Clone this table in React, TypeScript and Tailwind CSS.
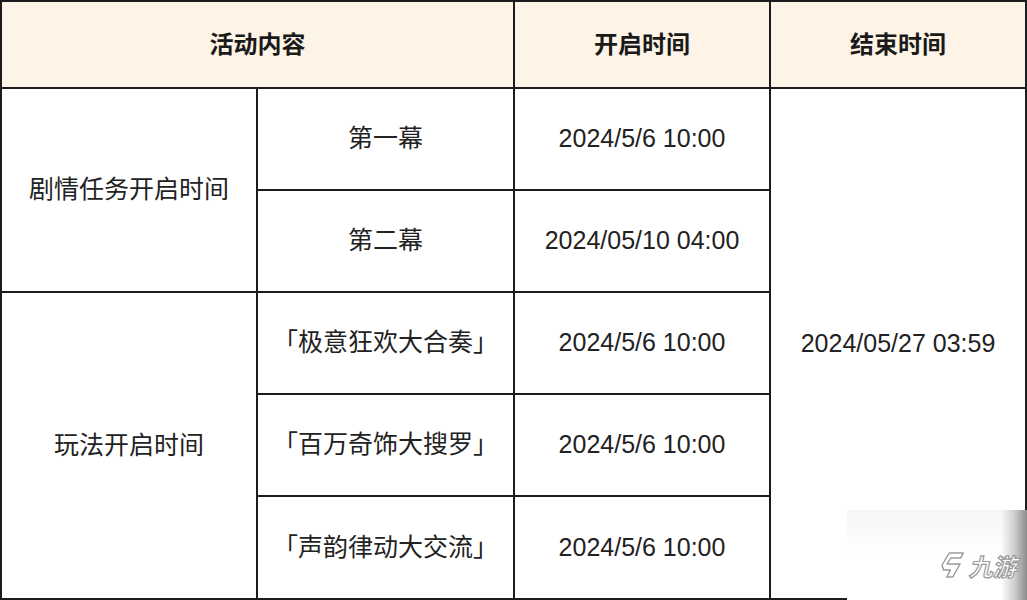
import React from "react";

const cell = "flex items-center justify-center bg-white text-[25px] text-[#222]";

function Watermark() {
  return (
    <div className="pointer-events-none absolute bottom-0 right-0 h-[90px] w-[180px] bg-gradient-to-b from-[#f6f6f6] via-white to-white">
      <div className="absolute inset-y-0 right-0 w-[26px] bg-gradient-to-r from-transparent via-[#d0d0d0] to-[#8c8c8c]" />
      <div className="absolute bottom-[22px] left-[94px] flex items-end gap-[8px]">
        <svg width="22" height="26" viewBox="0 0 22 26" className="-skew-x-6">
          <path
            d="M7 1 H21 L19 6 H9 L6 12 H19 L13 25 H7 L10 18 H3 L1 13 Z"
            fill="#ffffff"
            stroke="#9a9a9a"
            strokeWidth="1.5"
            strokeLinejoin="round"
          />
        </svg>
        <span className="-skew-x-12 font-['Noto_Sans_CJK_SC',sans-serif] text-[24px] font-bold leading-none text-white [-webkit-text-stroke:1.2px_#999999]">
          九游
        </span>
      </div>
    </div>
  );
}

export default function App() {
  return (
    <div className="relative h-[600px] w-[1027px] overflow-hidden bg-white font-['Liberation_Sans','Noto_Sans_CJK_SC',sans-serif]">
      <div className="grid grid-cols-[254px_255px_254px_254px] grid-rows-[85px_100px_100px_100px_100px_101px] gap-[2px] bg-[#1c1c1c] p-[2px]">
        <div className="col-span-2 flex items-center justify-center bg-[#fdf3e6] text-[24px] font-bold text-[#1a1a1a]">
          活动内容
        </div>
        <div className="flex items-center justify-center bg-[#fdf3e6] text-[24px] font-bold text-[#1a1a1a]">
          开启时间
        </div>
        <div className="flex items-center justify-center bg-[#fdf3e6] text-[24px] font-bold text-[#1a1a1a]">
          结束时间
        </div>

        <div className={`${cell} row-span-2`}>剧情任务开启时间</div>
        <div className={cell}>第一幕</div>
        <div className={cell}>2024/5/6 10:00</div>
        <div className={`${cell} row-span-5`}>2024/05/27 03:59</div>

        <div className={cell}>第二幕</div>
        <div className={cell}>2024/05/10 04:00</div>

        <div className={`${cell} row-span-3`}>玩法开启时间</div>
        <div className={cell}>「极意狂欢大合奏」</div>
        <div className={cell}>2024/5/6 10:00</div>

        <div className={cell}>「百万奇饰大搜罗」</div>
        <div className={cell}>2024/5/6 10:00</div>

        <div className={cell}>「声韵律动大交流」</div>
        <div className={cell}>2024/5/6 10:00</div>
      </div>
      <Watermark />
    </div>
  );
}
